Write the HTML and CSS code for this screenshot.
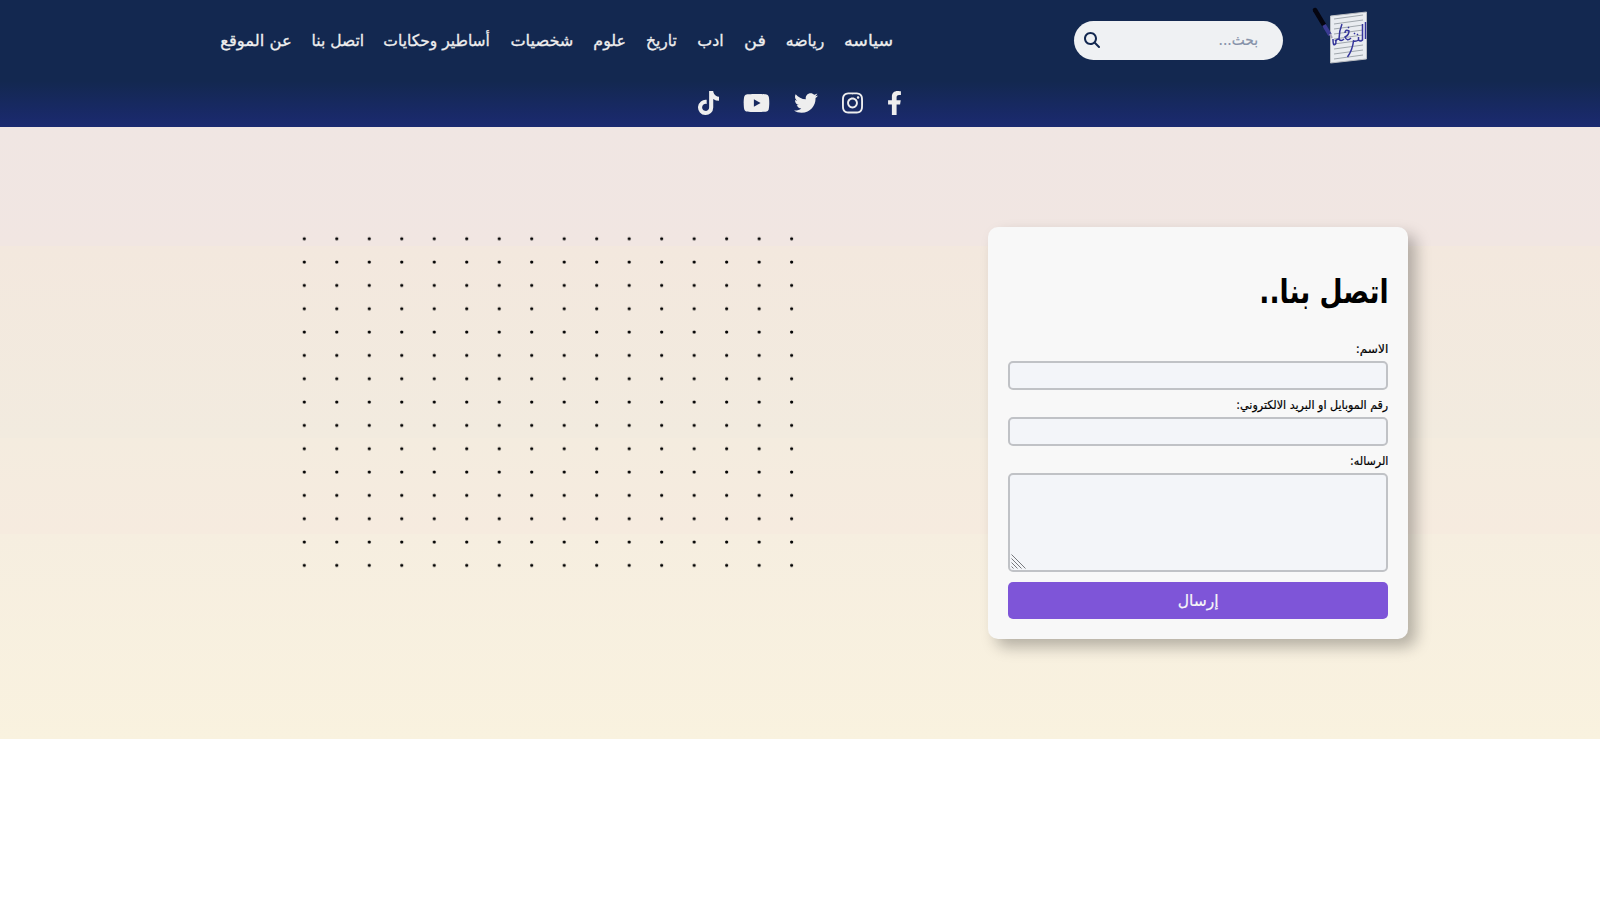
FILE: index.html
```html
<!DOCTYPE html>
<html lang="ar" dir="rtl">
<head>
<meta charset="utf-8">
<title>الترجمان</title>
<link rel="stylesheet" href="styles.css">
</head>
<body>
<header class="header">
  <div class="bar">
    <svg class="logo" viewBox="0 0 100 75">
      <path d="M40.500 16 76.500 12 76.500 59 40.500 63Z" fill="#e9ecf0" stroke="#b9bdc2" stroke-width="1"/>
      <path d="M44 19l29-4M44 24l29-4M44 29l29-4M44 34l29-4M44 39l29-4M44 44l29-4M44 49l29-4M44 54l29-4M44 59l29-4" stroke="#8d949b" stroke-width=".8"/>
      <path d="M75.500 22v17M72.500 24v16q-2 2-4 0q-3 2-5 1q-1 9-6 16M68.500 37v4M61 38q-4 4-6-1q4-2 4-6q-4-2-4 2M54 39q-3 3-5 0q0-8 3-15M49 39q-4 0-3 5M46 43q-3 5-3-4M64 33l1 1M67 34l1 1M58 27l1 1M45 40l1 1" fill="none" stroke="#34349b" stroke-width="1.500"/>
      <path d="M25 10 34 25" stroke="#050510" stroke-width="4.500" stroke-linecap="round"/>
      <path d="M34 25 40 35" stroke="#3b3b93" stroke-width="4"/>
      <path d="M40 34l2 4" stroke="#a9a3b8" stroke-width="2"/>
    </svg>
    <form class="search">
      <input class="search-input" type="text" placeholder="بحث...">
      <svg class="search-icon" viewBox="0 0 512 512"><path d="M416 208c0 45.900-14.900 88.300-40 122.700L502.600 457.400c12.500 12.500 12.500 32.800 0 45.300s-32.800 12.500-45.300 0L330.700 376c-34.400 25.200-76.800 40-122.700 40C93.100 416 0 322.900 0 208S93.100 0 208 0S416 93.100 416 208zM208 352a144 144 0 1 0 0-288 144 144 0 1 0 0 288z"/></svg>
    </form>
    <ul class="nav">
      <li class="n1"><a>سياسه</a></li><li class="n2"><a>رياضه</a></li><li class="n3"><a>فن</a></li><li class="n4"><a>ادب</a></li><li class="n5"><a>تاريخ</a></li><li class="n6"><a>علوم</a></li><li class="n7"><a>شخصيات</a></li><li class="n8"><a>أساطير وحكايات</a></li><li class="n9"><a>اتصل بنا</a></li><li class="n10"><a>عن الموقع</a></li>
    </ul>
  </div>
  <div class="social">
    <svg width="15" height="24" viewBox="0 0 320 512"><path d="M279.140 288l14.220-92.660h-88.910v-60.130c0-25.350 12.420-50.060 52.240-50.060h40.420V6.260S260.430 0 225.360 0c-73.220 0-121.080 44.380-121.080 124.720v70.620H22.890V288h81.390v224h100.170V288z"/></svg>
    <svg width="21" height="24" viewBox="0 0 448 512"><path d="M224.100 141c-63.600 0-114.900 51.300-114.900 114.900s51.300 114.900 114.900 114.900S339 319.500 339 255.900 287.700 141 224.100 141zm0 189.600c-41.100 0-74.700-33.500-74.700-74.700s33.500-74.700 74.700-74.700 74.700 33.500 74.700 74.700-33.600 74.700-74.700 74.700zm146.400-194.300c0 14.900-12 26.800-26.800 26.800-14.900 0-26.800-12-26.800-26.800s12-26.800 26.800-26.800 26.800 12 26.800 26.800zm76.100 27.200c-1.700-35.900-9.900-67.700-36.200-93.900-26.200-26.200-58-34.400-93.900-36.200-37-2.100-147.900-2.100-184.900 0-35.800 1.700-67.600 9.900-93.900 36.100s-34.400 58-36.200 93.900c-2.100 37-2.100 147.900 0 184.900 1.700 35.900 9.900 67.700 36.200 93.900s58 34.400 93.900 36.200c37 2.100 147.900 2.100 184.900 0 35.900-1.700 67.700-9.900 93.900-36.200 26.200-26.200 34.400-58 36.200-93.900 2.100-37 2.100-147.800 0-184.800zM398.800 388c-7.800 19.600-22.900 34.700-42.600 42.600-29.500 11.700-99.500 9-132.100 9s-102.700 2.600-132.100-9c-19.600-7.800-34.700-22.900-42.600-42.600-11.700-29.500-9-99.500-9-132.100s-2.600-102.700 9-132.100c7.800-19.600 22.900-34.700 42.600-42.600 29.500-11.700 99.500-9 132.100-9s102.700-2.600 132.100 9c19.600 7.800 34.700 22.900 42.600 42.600 11.700 29.500 9 99.500 9 132.100s2.700 102.700-9 132.100z"/></svg>
    <svg width="24" height="24" viewBox="0 0 512 512"><path d="M459.370 151.716c.325 4.548.325 9.097.325 13.645 0 138.720-105.583 298.558-298.558 298.558-59.452 0-114.680-17.219-161.137-47.106 8.447.974 16.568 1.299 25.340 1.299 49.055 0 94.213-16.568 130.274-44.832-46.132-.975-84.792-31.188-98.112-72.772 6.498.974 12.995 1.624 19.818 1.624 9.421 0 18.843-1.300 27.614-3.573-48.081-9.747-84.143-51.980-84.143-102.985v-1.299c13.969 7.797 30.214 12.670 47.431 13.319-28.264-18.843-46.781-51.005-46.781-87.391 0-19.492 5.197-37.360 14.294-52.954 51.655 63.675 129.300 105.258 216.365 109.807-1.624-7.797-2.599-15.918-2.599-24.040 0-57.828 46.782-104.934 104.934-104.934 30.213 0 57.502 12.670 76.670 33.137 23.715-4.548 46.456-13.320 66.599-25.340-7.798 24.366-24.366 44.833-46.132 57.827 21.117-2.273 41.584-8.122 60.426-16.243-14.292 20.791-32.161 39.308-52.628 54.253z"/></svg>
    <svg width="27" height="24" viewBox="0 0 576 512"><path d="M549.655 124.083c-6.281-23.650-24.787-42.276-48.284-48.597C458.781 64 288 64 288 64S117.220 64 74.629 75.486c-23.497 6.322-42.003 24.947-48.284 48.597-11.412 42.867-11.412 132.305-11.412 132.305s0 89.438 11.412 132.305c6.281 23.650 24.787 41.500 48.284 47.821C117.220 448 288 448 288 448s170.780 0 213.371-11.486c23.497-6.321 42.003-24.171 48.284-47.821 11.412-42.867 11.412-132.305 11.412-132.305s0-89.438-11.412-132.305zm-317.510 213.508V175.185l142.739 81.205-142.739 81.201z"/></svg>
    <svg width="21" height="24" viewBox="0 0 448 512"><path d="M448 209.910a210.060 210.060 0 0 1-122.770-39.250V349.380A162.550 162.550 0 1 1 185 188.310V278.200a74.620 74.620 0 1 0 52.230 71.180V0h88a121.180 121.180 0 0 0 1.860 22.170A122.180 122.180 0 0 0 381 102.390a121.430 121.430 0 0 0 67 20.140z"/></svg>
  </div>
</header>
<main class="contact">
  <form class="card">
    <h1 class="title"><span>اتصل بنا..</span></h1>
    <label class="label l1"><span>الاسم:</span></label>
    <input class="field" type="text">
    <label class="label l2"><span>رقم الموبايل او البريد الالكتروني:</span></label>
    <input class="field" type="text">
    <label class="label l3"><span>الرساله:</span></label>
    <div class="area-wrap">
      <textarea class="field area"></textarea>
      <svg class="grip" viewBox="0 0 15 15"><path d="M.5 .5 14.500 14.500M.5 4.500 10.500 14.500M.5 8.500 6.500 14.500M.5 12.500 2.500 14.500"/></svg>
    </div>
    <button class="send" type="button"><span>إرسال</span></button>
  </form>
  <svg class="dots" width="520" height="350">
    <defs><pattern id="dot" width="32.490" height="23.330" patternUnits="userSpaceOnUse"><circle cx="16.300" cy="11.700" r="1.600"/></pattern></defs>
    <rect width="520" height="350" fill="url(#dot)"/>
  </svg>
</main>
</body>
</html>
```
FILE: styles.css
```css
* { box-sizing: border-box; }
body { margin: 0; background: #fff; font-family: "DejaVu Sans", sans-serif; }
.header { height: 127px; color: #eee; }
.bar { height: 81px; background: #132850; display: flex; align-items: center; padding-right: 210px; }
.logo { width: 100px; height: 75px; margin-bottom: 6px; flex: none; }
.search { width: 209px; height: 39px; margin-right: 7px; border-radius: 20px; background: #eff1f3; display: flex; align-items: center; padding: 0 25px 2px 10px; flex: none; }
.search-input { flex: 1; min-width: 0; border: 0; padding: 0; background: none; font: 15px "DejaVu Sans", sans-serif; outline: none; transform: scaleX(.92); transform-origin: right; }
.search-input::placeholder { color: #8591a9; opacity: 1; -webkit-text-stroke: .2px #8591a9; }
.search-icon { width: 16px; height: 16px; fill: #132850; }
.nav { list-style: none; margin: 0 181px 0 0; padding: 0; display: flex; gap: 20px; font-size: 16px; -webkit-text-stroke: .3px #eee; }
.nav li { display: flex; white-space: nowrap; }
.nav a { flex: none; transform: scaleX(var(--stretch, 1)); transform-origin: right; }
.n1 { width: 49px; --stretch: 1.09; }
.n2 { width: 38px; --stretch: .98; }
.n3 { width: 22px; --stretch: 1.1; }
.n4 { width: 27px; --stretch: .99; }
.n5 { width: 31px; --stretch: .97; }
.n6 { width: 33px; --stretch: .99; }
.n7 { width: 63px; --stretch: 1.01; }
.n8 { width: 106px; --stretch: .97; }
.n9 { width: 52px; --stretch: .97; }
.n10 { width: 71px; --stretch: 1.025; }
.social { height: 46px; padding-bottom: 2px; background: linear-gradient(#132850, #1b2a70); display: flex; justify-content: center; align-items: center; gap: 24px; }
.social svg { fill: #eee; }
.contact { height: 612px; background: linear-gradient(#f0e6e3 0, #f1e6e2 119px, #f3e8de 119px, #f2ebdf 311px, #f4ecdf 311px, #f6ebdf 407px, #f6eee0 407px, #f9f2df 612px); display: flex; align-items: flex-start; padding: 100px 192px 0 0; }
.card { width: 420px; height: 412px; padding: 44px 20px 20px; background: #f8f8f8; border-radius: 10px; box-shadow: 8px 8px 15px rgba(0,0,0,.27); display: flex; flex-direction: column; }
.title { margin: 0 0 20px; height: 44px; line-height: 42px; font-size: 33px; white-space: nowrap; }
.title span { display: inline-block; transform: scaleX(.805); transform-origin: right; }
.label { height: 26px; line-height: 29px; font-size: 12px; white-space: nowrap; }
.label span { display: inline-block; transform: scaleX(.925); transform-origin: right; -webkit-text-stroke: .2px #000; }
.l1 span { transform: scaleX(1.01); }
.field { height: 29px; border: 2px solid #c0c2c6; border-radius: 5px; background: #f3f5f9; margin: 0 0 1px; padding: 0; flex: none; }
.area-wrap { position: relative; height: 99px; margin-bottom: 10px; flex: none; }
.area { display: block; width: 100%; height: 99px; margin: 0; resize: none; }
.grip { position: absolute; left: 3px; bottom: 3px; width: 15px; height: 15px; fill: none; stroke: #77797d; stroke-width: 1; }
.send { height: 37px; border: 0; border-radius: 5px; background: #7e55d8; color: #f8f8f8; font: 16px "DejaVu Sans", sans-serif; -webkit-text-stroke: .2px #f8f8f8; }
.send span { display: inline-block; transform: scaleX(.97); }
.dots { margin: 0 180px 0 0; }
```
